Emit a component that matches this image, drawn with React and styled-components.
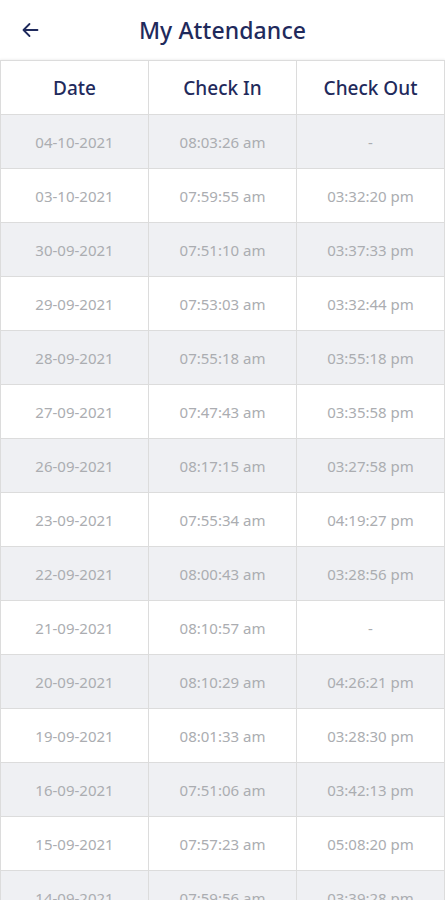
import React from "react";
import styled, { createGlobalStyle } from "styled-components";

const Global = createGlobalStyle`
  html, body { margin: 0; padding: 0; background: #fff; }
  body { font-family: "Noto Sans", sans-serif; }
  * { box-sizing: border-box; }
`;

const Page = styled.div`
  width: 445px;
  height: 900px;
  overflow: hidden;
  background: #fff;
`;

const Header = styled.header`
  height: 60px;
  display: grid;
  grid-template-columns: 60px 1fr 60px;
  align-items: center;
`;

const BackButton = styled.button`
  border: none;
  background: none;
  padding: 0 0 0 22px;
  display: flex;
  align-items: center;
  color: #1f2a5c;
  cursor: pointer;
`;

const Title = styled.h1`
  margin: 0;
  text-align: center;
  font-size: 23px;
  font-weight: 500;
  color: #1f2a5c;
  letter-spacing: 0.1px;
`;

const Table = styled.div`
  border-top: 1px solid #dcdcdc;
  border-left: 1px solid #dcdcdc;
  box-shadow: 0 -1px 2px rgba(0,0,0,0.06);
`;

const Row = styled.div`
  display: grid;
  grid-template-columns: 148px 148px 148px;
  height: 54px;
  background: ${(p) => (p.$shaded ? "#eff0f3" : "#fff")};
`;

const Cell = styled.div`
  display: flex;
  align-items: center;
  justify-content: center;
  border-right: 1px solid #dcdcdc;
  border-bottom: 1px solid #dcdcdc;
  font-size: ${(p) => (p.$head ? "19px" : "15px")};
  font-weight: ${(p) => (p.$head ? 500 : 400)};
  color: ${(p) => (p.$head ? "#1f2a5c" : "#abadb1")};
`;

const rows = [
  ["04-10-2021", "08:03:26 am", "-"],
  ["03-10-2021", "07:59:55 am", "03:32:20 pm"],
  ["30-09-2021", "07:51:10 am", "03:37:33 pm"],
  ["29-09-2021", "07:53:03 am", "03:32:44 pm"],
  ["28-09-2021", "07:55:18 am", "03:55:18 pm"],
  ["27-09-2021", "07:47:43 am", "03:35:58 pm"],
  ["26-09-2021", "08:17:15 am", "03:27:58 pm"],
  ["23-09-2021", "07:55:34 am", "04:19:27 pm"],
  ["22-09-2021", "08:00:43 am", "03:28:56 pm"],
  ["21-09-2021", "08:10:57 am", "-"],
  ["20-09-2021", "08:10:29 am", "04:26:21 pm"],
  ["19-09-2021", "08:01:33 am", "03:28:30 pm"],
  ["16-09-2021", "07:51:06 am", "03:42:13 pm"],
  ["15-09-2021", "07:57:23 am", "05:08:20 pm"],
  ["14-09-2021", "07:59:56 am", "03:39:28 pm"],
];

export default function App() {
  return (
    <Page>
      <Global />
      <Header>
        <BackButton aria-label="Back">
          <svg width="17" height="16" viewBox="0 0 17 16" fill="none" stroke="#1f2a5c" strokeWidth="1.8" strokeLinecap="round" strokeLinejoin="round">
            <path d="M15.5 8H1.5M7.5 2L1.5 8l6 6" />
          </svg>
        </BackButton>
        <Title>My Attendance</Title>
        <div />
      </Header>
      <Table>
        <Row>
          <Cell $head>Date</Cell>
          <Cell $head>Check In</Cell>
          <Cell $head>Check Out</Cell>
        </Row>
        {rows.map((r, i) => (
          <Row key={i} $shaded={i % 2 === 0}>
            {r.map((c, j) => (
              <Cell key={j}>{c}</Cell>
            ))}
          </Row>
        ))}
      </Table>
    </Page>
  );
}
